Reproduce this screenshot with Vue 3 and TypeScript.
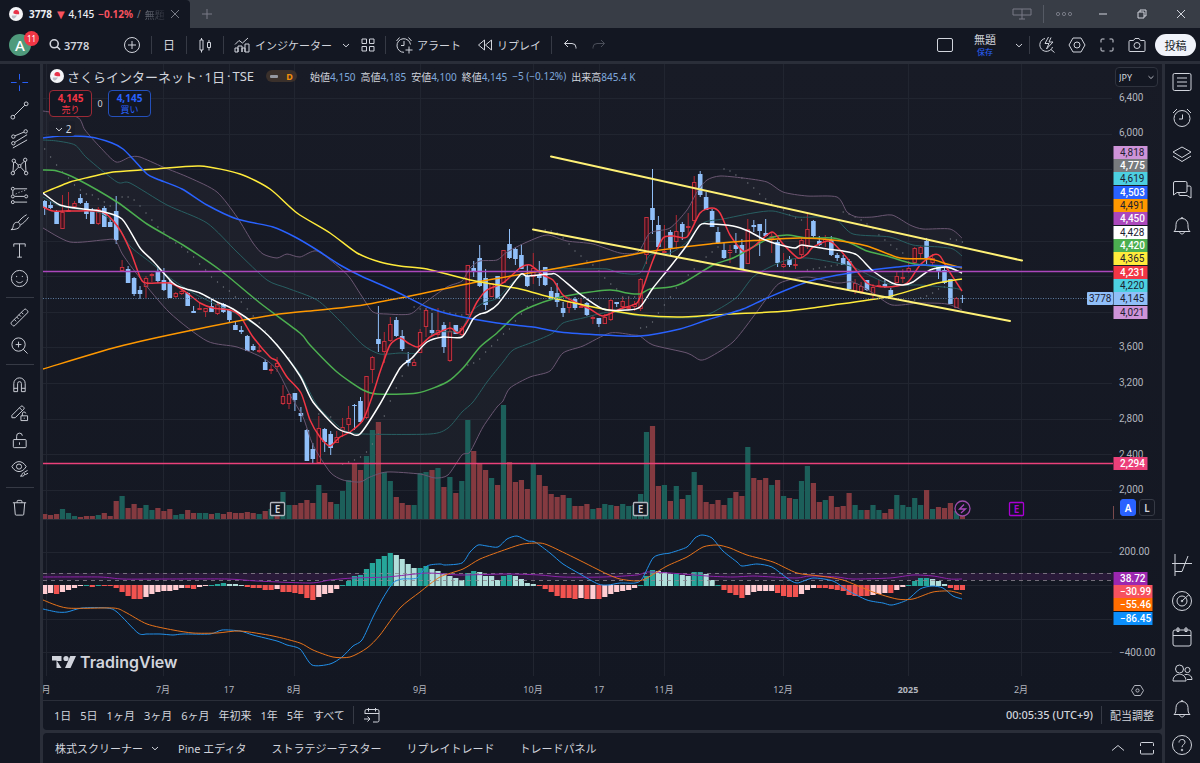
<script setup lang="ts">
import { ref } from 'vue'

type Point = [number, number]

const circle = (x: number, y: number, r: number): string =>
  `M${x - r} ${y}a${r} ${r} 0 1 0 ${r * 2} 0a${r} ${r} 0 1 0 ${-r * 2} 0z`

/* Stroke icons on a 20 x 20 grid */
const icons: Record<string, string> = {
  cross: 'M10 1v6M10 13v6M1 10h6M13 10h6',
  line: circle(3, 17, 2) + circle(17, 3, 2) + 'M4.500 15.500L15.500 4.500',
  pitch: circle(3.5, 8, 1.8) + circle(3.5, 15, 1.8) + circle(16.5, 2.5, 1.8) + 'M5.200 7.200L14.800 3.200M5 14L18 6M3 20L18 11.500',
  pattern: circle(4, 4, 1.8) + circle(16, 3, 1.8) + circle(3, 17, 1.8) + circle(17, 17, 1.8) + circle(10, 9.5, 1.6) +
    'M3.800 6L3.200 15M16.200 5L16.800 15M5.300 5.300L8.800 8.500M14.900 4.500L11.200 8.400M4.300 15.600L8.900 10.700M15.700 15.600L11.200 10.700',
  forecast: circle(3, 4, 1.6) + circle(3, 12, 1.6) + circle(17, 12, 1.6) + circle(3, 18, 1.6) +
    'M5 4h13M5 12h10M5 18h13M3 6v4M6 9.500l1-.5M9 8l1-.4M12 7l1-.4M15 6l1-.4',
  brush: 'M1 17.500c3-.5 1.500-4 3.500-6.500c1.800-2 5.500-1.500 6 1c.6 3.500-3 5.500-9.500 5.500zM8.500 9.800c2.500-3.300 5.500-6 9-8M11 12.500c3-1.500 5.500-4 8.500-8',
  text: 'M4 6V3h12v3M10 3v14M7.500 17h5',
  smile: circle(10, 10, 8.5) + 'M6.500 12.500c1.500 2.600 5.500 2.600 7 0M7 7.300v1.200M13 7.300v1.200',
  ruler: 'M1.500 15L15 1.500a1.500 1.500 0 0 1 2 0l1.500 1.500a1.500 1.500 0 0 1 0 2L5 18.500a1.500 1.500 0 0 1-2 0L1.500 17a1.500 1.500 0 0 1 0-2zM4.500 12l2 2M7 9.500l2 2M9.500 7l2 2M12 4.500l2 2',
  zoom: circle(9, 9, 7) + 'M14 14l4.500 4.500M9 6v6M6 9h6',
  magnet: 'M4 17.500V9a6 6 0 0 1 12 0v8.500h-4V9a2 2 0 0 0-4 0v8.500zM4 14h4M12 14h4',
  pencilLock: 'M2 13L11.500 3.500a1.500 1.500 0 0 1 2 0l1 1a1.500 1.500 0 0 1 0 2L5.500 15.500H2zM10 5l3 3M11.500 13.500h7v5h-7zM13 13.500v-2a1.800 1.800 0 0 1 3.600-.5M15 15.500v1',
  lock: 'M4 9h12a1 1 0 0 1 1 1v6.500a1 1 0 0 1-1 1H4.500a1 1 0 0 1-1-1V10a1 1 0 0 1 1-1M7 9V5.500a3 3 0 0 1 6-.5M10 12v2.500',
  eye: circle(9.5, 8, 2.7) + 'M2 8c4-7 11-7 15 0c-4 7-11 7-15 0zM11 18c2 0 1-3 3-3.500c2 0 2 3-.5 3.500zM15 14l3.500-2M16 16.500l3-1.500',
  trash: 'M3 5h14M7.500 5V3.500a1 1 0 0 1 1-1h3a1 1 0 0 1 1 1V5M4.500 5l1 12a1 1 0 0 0 1 1h7a1 1 0 0 0 1-1l1-12',
  list: 'M2.500 1.500h15a1.500 1.500 0 0 1 1.500 1.500v14a1.500 1.500 0 0 1-1.500 1.500h-15A1.500 1.500 0 0 1 1 17V3a1.500 1.500 0 0 1 1.500-1.500zM5 6h10M5 10h10M5 14h10',
  alarm: circle(10, 10.500, 8) + 'M10.500 6.500v4.500H7M1 5l4-4M19 5l-4-4',
  layers: 'M10 3l9 5l-9 5.500L1 8zM1 12l9 5.500l9-5.500',
  chat: 'M3 1.500h10.500a1.500 1.500 0 0 1 1.500 1.500v8a1.500 1.500 0 0 1-1.500 1.500H5L1.500 15V3A1.500 1.500 0 0 1 3 1.500zM15 6h2.500A1.500 1.500 0 0 1 19 7.500V18l-4-2.500H8a1 1 0 0 1-1-1v-2',
  bell: 'M2 15.500c1.800-1.500 2-3 2-7a6 6 0 0 1 12 0c0 4 .2 5.500 2 7zM7.500 15.500c.5 3.300 4.500 3.300 5 0M9 2.500a1 1 0 0 1 2 0',
  pine: 'M3-1v22M0 8.500h20M3 16.500h7L16 1',
  target: circle(10, 10, 9.500) + circle(10, 10, 5) + circle(10, 10, 0.8) + 'M10 10l7-6.500',
  calendar: 'M3 3h14a2 2 0 0 1 2 2v12a2 2 0 0 1-2 2H3a2 2 0 0 1-2-2V5a2 2 0 0 1 2-2zM1 8.500h18M5 1h2v3.500H5zM13 1h2v3.500h-2z',
  people: circle(7.5, 6, 4) + circle(15.5, 7, 2.600) + 'M1 18c0-9 13-9 13 0zM12.500 11.800c4-1.300 7.500 1 7.500 4.700h-5',
  help: circle(10, 10, 9.5) + circle(10, 15, 0.8) + 'M7 7.500c0-4 6-4 6-.3c0 2.500-3 2.300-3 5',
  plusCircle: circle(10, 10, 7.500) + 'M10 6v8M6 10h8',
  candles: 'M5 5h3v10H5zM6.500 3v2M6.500 15v2.500M12.500 7.500h3v5h-3zM14 5v2.500M14 12.500v3',
  indicator: 'M3 17v-4h3v4zM6 17v-6h4v6M10 17v-4h3v4M13 17V9h4v8zM3 9.500l4-4l3.500 2.500L16 3',
  grid: 'M4 4h4.500v4.500H4zM11.500 4H16v4.500h-4.500zM4 11.500h4.500V16H4zM11.500 11.500H16V16h-4.500z',
  alertAdd: 'M16.500 9.500a6.800 6.800 0 1 0-6.500 7.800M10 6v4.500H7M2.500 6l3-3.500M17.500 6l-3-3.500M15 11.500v7M11.500 15h7',
  replay: 'M9.500 5v10L3.500 10zM16.500 5v10l-6-5z',
  undo: 'M8 5L4.500 8.500L8 12M4.500 8.500H12a4 4 0 0 1 4 4v1',
  redo: 'M12 5l3.500 3.500L12 12M15.500 8.500H8a4 4 0 0 0-4 4v1',
  square: 'M4 3.500h12a1.500 1.500 0 0 1 1.500 1.500v10a1.500 1.500 0 0 1-1.500 1.500H4A1.500 1.500 0 0 1 2.500 15V5A1.500 1.500 0 0 1 4 3.500z',
  bolt: 'M8 3.500a6.500 6.500 0 1 0 7.500 8.500M14 14.500l3.500 3M11.500 2L8 8.500h4L9.500 14L16 7h-4l2-4.500',
  gear: 'M6 3h8l4 7l-4 7H6l-4-7z' + circle(10, 10, 3),
  full: 'M4 7.500V5a1 1 0 0 1 1-1h2.500M12.500 4H15a1 1 0 0 1 1 1v2.500M16 12.500V15a1 1 0 0 1-1 1h-2.500M7.500 16H5a1 1 0 0 1-1-1v-2.500',
  camera: 'M3 5.500h3.500L8 3.500h4l1.500 2H17a1 1 0 0 1 1 1V15.500a1 1 0 0 1-1 1H3a1 1 0 0 1-1-1V6.500a1 1 0 0 1 1-1z' + circle(10, 10.500, 3),
  search: circle(8.500, 9, 5) + 'M12.200 12.700L16 16.500',
  down: 'M7 9l3 2.800L13 9',
  up: 'M4 12.500L10 7.500l6 5',
  close: 'M6 6l8 8M14 6l-8 8',
  add: 'M10 5v10M5 10h10',
  sync: 'M1 5h18v6H1zM10 5v10M7 15h6',
  dots: circle(4, 10, 1.600) + circle(10, 10, 1.600) + circle(16, 10, 1.600),
  min: 'M6 10h8',
  restore: 'M6 8h6v6H6zM8 8V6h6v6h-2',
  goto: 'M3 9V6a1.500 1.500 0 0 1 1.500-1.500h11A1.500 1.500 0 0 1 17 6v9.500a1.500 1.500 0 0 1-1.500 1.500H11M3 8.500h14M6.500 3v3.500M13.500 3v3.500M2 14h6M5.500 11.500L8 14l-2.500 2.500',
  panel: 'M3.500 8V5.500a1 1 0 0 1 1-1h11a1 1 0 0 1 1 1V8M16.500 12v3a1 1 0 0 1-1 1h-11a1 1 0 0 1-1-1v-3',
}

const leftTools: { name: string; icon: string }[][] = [
  [
    { name: '十字', icon: 'cross' },
    { name: 'トレンドライン', icon: 'line' },
    { name: 'フィボナッチ', icon: 'pitch' },
    { name: 'パターン', icon: 'pattern' },
    { name: '予測', icon: 'forecast' },
    { name: 'ブラシ', icon: 'brush' },
    { name: 'テキスト', icon: 'text' },
    { name: 'アイコン', icon: 'smile' },
  ],
  [
    { name: '計測', icon: 'ruler' },
    { name: 'ズーム', icon: 'zoom' },
  ],
  [
    { name: 'マグネット', icon: 'magnet' },
    { name: '描画モード', icon: 'pencilLock' },
    { name: 'ロック', icon: 'lock' },
    { name: '非表示', icon: 'eye' },
  ],
  [{ name: '削除', icon: 'trash' }],
]

const rightTop = [
  { name: 'ウォッチリスト', icon: 'list' },
  { name: 'アラート一覧', icon: 'alarm' },
  { name: 'レイヤー', icon: 'layers' },
  { name: 'チャット', icon: 'chat' },
  { name: '通知', icon: 'bell' },
]
const rightBottom = [
  { name: 'Pine', icon: 'pine' },
  { name: 'スクリーナー', icon: 'target' },
  { name: 'カレンダー', icon: 'calendar' },
  { name: 'コミュニティ', icon: 'people' },
  { name: 'お知らせ', icon: 'bell' },
  { name: 'ヘルプ', icon: 'help' },
]

const ranges = ['1日', '5日', '1ヶ月', '3ヶ月', '6ヶ月', '年初来', '1年', '5年', 'すべて']
const panels = ['Pine エディタ', 'ストラテジーテスター', 'リプレイトレード', 'トレードパネル']
const quotes = [
  ['始値', '4,150'],
  ['高値', '4,185'],
  ['安値', '4,100'],
  ['終値', '4,145'],
  ['', '−5 (−0.12%)'],
  ['出来高', '845.4 K'],
]
const currency = ref('JPY')

/* Bar geometry */
const barX = (i: number): number => Math.round((44.67 + i * 5.959) * 10) / 10

/* high, body top, body bottom, low; a leading "d" marks a falling bar */
const candleData =
  'd200 201 208 215,d201 205 208 209,d210 212 224 224,u195 212 229 229,u192 210 211 212,u201 203 207 209,d194 198 203 204,d201 203 214 219,d208 210 224 224,u207 209 224 225,' +
  'd206 208 227 227,d219 222 227 227,d196 211 240 244,u260 267 271 271,d266 269 283 283,d277 278 294 296,d286 290 294 299,u276 278 287 298,u273 274 276 282,d266 271 281 283,' +
  'd268 280 290 291,d280 282 298 298,u292 293 297 298,u289 291 294 295,d292 293 306 306,d306 311 313 313,u303 308 310 310,u308 308 312 317,d298 306 312 312,u303 304 314 315,' +
  'd303 304 312 313,d309 310 320 322,d321 325 330 330,d326 330 332 334,d335 336 351 351,d344 346 350 351,u346 350 351 353,d359 362 370 370,u365 369 370 374,u357 363 367 372,' +
  'u385 396 404 405,u393 394 404 409,d393 393 400 411,d407 413 416 422,d429 430 461 461,d443 449 459 463,u416 428 463 463,d428 429 442 452,d431 434 448 455,u431 437 443 443,' +
  'u418 427 431 437,u406 418 425 433,d404 405 406 430,d397 401 422 422,u376 376 418 419,u356 357 370 383,d306 339 344 352,u332 341 352 363,u317 324 341 342,d317 320 336 337,' +
  'd330 336 349 351,d352 360 363 366,u359 362 366 366,u329 332 353 353,u308 310 327 337,d313 330 333 336,u308 330 335 338,d322 325 347 353,u322 331 361 362,d325 325 334 334,' +
  'u326 328 335 336,u265 265 315 315,d261 268 272 277,d245 258 286 287,d269 278 305 310,u283 283 297 297,d276 276 299 299,u250 250 283 283,d229 244 258 259,d248 249 259 265,' +
  'd244 255 269 269,d265 276 286 287,u253 268 277 284,d261 275 278 286,d267 267 285 286,d287 291 299 299,d283 293 302 307,d302 308 313 317,u297 302 308 313,d297 299 308 310,' +
  'u298 306 307 308,d302 303 315 316,u315 317 319 324,d318 318 324 327,u314 317 324 324,u299 300 320 321,d302 302 304 307,u297 301 307 309,u297 307 308 310,u301 304 307 311,' +
  'u278 279 309 311,u217 217 255 264,d169 208 220 234,d216 225 247 247,u225 251 253 254,d230 232 248 256,u215 231 242 249,d222 224 232 240,u213 226 227 236,u176 182 221 223,' +
  'd171 174 195 197,d192 197 210 210,d209 211 227 227,d227 232 243 244,d243 250 258 259,u245 250 253 263,d233 245 249 253,d239 245 269 269,u219 229 264 264,d220 225 227 232,' +
  'd224 224 231 256,d219 233 236 237,u233 236 239 253,d240 242 263 267,u253 264 267 268,d256 259 265 267,u259 264 265 269,u237 240 255 257,u212 229 247 249,d220 221 236 238,' +
  'd236 241 245 246,u235 239 242 247,d236 240 255 256,d253 255 258 261,d255 258 265 265,d259 261 289 289,u279 283 291 294,u282 286 292 294,d280 280 290 291,u284 287 295 299,' +
  'u280 285 286 287,d280 284 287 288,d288 290 297 297,u272 276 283 283,u269 277 279 283,u261 268 272 273,u247 248 263 265,u246 247 254 258,d238 241 258 264,u254 258 263 265,' +
  'd266 267 272 279,d266 270 283 284,d279 279 304 304,u297 298 308 308,d295 298 299 303'

const candles = candleData.split(',').map((s, i) => {
  const [high, top, bottom, low] = s.slice(1).split(' ').map(Number)
  return { x: barX(i), down: s[0] === 'd', high, top, bottom, low }
})

const volumeData =
  'r5 r4 r5 g10 g6 g3 r2 r3 r3 g4 r6 r3 r18 g23 r11 r15 r11 g14 g9 r11 r8 r10 g4 g5 r9 r6 g6 g6 r5 g6 r5 r7 r6 r6 r7 r6 g5 r8 g10 r10 g27 g14 r14 r16 r19 r16 g34 r26 r17 g15 ' +
  'g28 g39 r55 r49 g63 g89 r97 g47 g38 r22 r16 r14 g14 g46 g47 r49 g51 r32 g42 r26 g38 g99 r68 r55 r49 g41 r34 g114 r57 r37 r39 r30 g55 r44 r33 r25 r22 r24 g21 r13 r13 r15 g10 r11 g15 g14 r13 g15 g13 g14 ' +
  'g25 g87 r93 r33 g34 r18 g33 r20 g24 g47 r34 r17 r15 r19 r14 g21 r27 r23 g72 r41 r39 r41 g34 r39 g23 r21 g20 g38 g53 r36 r17 g19 r23 r12 r13 r26 g14 g9 r9 g14 g9 r6 r10 g24 g14 g12 g21 g14 r29 g10 r12 r11 r16 g8 r3'
const volumes = volumeData.split(' ').map((s, i) => ({ x: barX(i), up: s[0] === 'g', h: Number(s.slice(1)) }))

/* d/l rising and fading above zero, r/p falling and recovering below */
const histData =
  'p9 p8 r9 p7 p5 p3 p1 d1 r2 d1 r1 r1 r3 r7 r11 r14 r14 p12 p9 p7 p6 p6 p5 p3 r3 r4 p2 p1 d1 d2 d3 l2 l2 l1 r2 r3 r3 r5 r5 p4 r7 r7 r8 r9 r13 r15 p12 p9 p8 p4 ' +
  'd1 d5 d10 d11 d17 d23 d27 d30 d33 l31 l27 l22 l18 d18 d20 l17 l15 l12 l10 l8 l6 d13 d15 l14 l10 l10 l6 d10 d11 l10 l7 l3 l2 r1 r4 r7 r11 r13 r13 r14 p13 r14 p14 r14 p12 p9 p7 p6 p5 p3 ' +
  'd1 d10 d16 l15 l14 l12 d12 l11 l10 d14 d14 l12 l6 d1 r5 r8 r10 r13 p10 p7 p6 p6 p6 r8 r11 r12 r12 p9 p5 p3 r3 r3 r4 r5 r6 r10 r11 r11 r11 p10 p9 p8 r8 p5 p2 d1 d5 d8 d8 l7 l5 l2 r3 r5 r5'
const histogram = histData.split(' ').map((s, i) => {
  const h = Number(s.slice(1))
  const above = s[0] === 'd' || s[0] === 'l'
  return { x: barX(i), y: above ? 586 - h : 585, h, kind: s[0] }
})

const dotSegments: [number, number[]][] = [
  [0, [149, 157, 165, 172, 178, 185, 190, 194, 195, 199, 202, 206]],
  [13, [197, 197, 200, 206, 213, 220, 227, 232, 238, 243, 247, 252, 257, 264, 270, 277, 282, 287, 291, 297, 302, 309, 316, 323, 331, 338, 345, 352, 358]],
  [45, [402, 414, 416, 417]],
  [50, [464, 462, 460, 457, 452, 444, 434, 416, 401, 388, 376, 366]],
  [62, [307, 309, 309, 310, 311, 311, 313, 314, 315]],
  [71, [365, 363, 359, 352, 346, 340, 334, 329, 321, 314, 307, 300]],
  [84, [230, 231, 233, 238, 244, 251, 256, 261, 265, 271, 278, 284, 289]],
  [97, [297, 297, 297]],
  [100, [328, 327, 322, 313, 305, 297, 288, 282, 275, 269, 262, 257, 252, 247]],
  [114, [169, 171, 175, 178, 183, 188, 194, 199, 203, 207, 210, 215, 218, 220]],
  [128, [270, 269, 268, 267, 266, 265]],
  [134, [212, 214, 217, 220, 224, 229, 235, 240, 245, 249, 253]],
  [145, [301, 300, 298, 296, 293, 289, 287]],
  [152, [239, 240, 242]],
]
const dots = dotSegments.flatMap(([start, ys]) => ys.map((y, k) => ({ x: barX(start + k), y })))

const parse = (s: string): Point[] => s.split(' ').map((p) => p.split(',').map(Number) as Point)

/* Catmull-Rom curve through the points */
const curve = (pts: Point[], lead = 'M'): string => {
  let d = `${lead}${pts[0][0]} ${pts[0][1]}`
  for (let i = 0; i < pts.length - 1; i++) {
    const a = pts[Math.max(i - 1, 0)]
    const b = pts[i]
    const c = pts[i + 1]
    const e = pts[Math.min(i + 2, pts.length - 1)]
    d += `C${(b[0] + (c[0] - a[0]) / 8).toFixed(1)} ${(b[1] + (c[1] - a[1]) / 8).toFixed(1)} ${(c[0] - (e[0] - b[0]) / 8).toFixed(1)} ${(c[1] - (e[1] - b[1]) / 8).toFixed(1)} ${c[0]} ${c[1]}`
  }
  return d
}

const upper = parse(
  '43,111 77,117 85,130 100,147 116,162 130,157 140,157 163,167 190,178 217,192 237,217 253,243 263,254 277,258 287,254 300,257 317,251 340,268 350,278 363,298 373,312 387,314 410,314 423,304 447,287 462,281 470,268 480,261 497,260 507,252 527,242 547,235 567,241 593,244 620,253 638,252 650,233 670,228 687,210 697,192 707,180 720,176 743,178 767,182 783,192 807,196 837,197 847,212 857,217 873,217 892,215 910,225 923,229 950,229 962,238',
)
const lower = parse(
  '43,228 70,242 103,240 115,240 123,255 140,278 170,313 207,341 237,347 263,358 277,370 290,395 303,417 313,445 330,472 343,480 360,482 370,477 387,472 420,474 435,478 448,475 462,455 470,452 483,427 497,407 503,401 510,388 530,377 550,371 563,353 583,346 610,333 633,335 640,336 653,345 687,353 700,360 710,357 733,342 753,317 767,298 780,283 807,277 837,283 853,282 873,293 892,305 920,303 947,304 962,310',
)
const bandFill = curve(upper) + curve([...lower].reverse(), 'L') + 'Z'

const lines: { cls: string; d: string }[] = [
  { cls: 'mauve', d: curve(upper) },
  { cls: 'mauve', d: curve(lower) },
  { cls: 'teal', d: curve(parse('43,140 57,141 75,145 87,158 117,182 130,183 167,205 207,223 237,252 267,280 287,288 317,300 340,321 363,345 380,354 400,353 417,353 423,343 437,332 460,331 470,313 483,303 498,298 513,282 527,274 553,269 583,269 607,269 620,273 640,273 650,255 670,253 687,242 703,223 723,219 753,213 773,211 797,217 820,217 837,220 853,234 890,237 913,245 940,247 953,249 962,256')) },
  { cls: 'teal', d: curve(parse('43,197 60,206 83,210 100,213 117,225 130,246 150,262 173,280 193,293 217,305 233,312 260,328 277,345 300,374 317,405 337,425 345,431 363,434 430,434 448,428 462,412 473,402 487,382 503,362 513,350 533,342 553,333 563,323 583,318 610,312 640,316 670,318 700,317 717,310 737,297 753,277 770,267 787,260 807,258 837,263 853,267 873,277 893,285 920,285 953,288 962,290')) },
  { cls: 'green', d: curve(parse('43,170 57,171 77,179 117,202 147,224 183,245 220,270 260,303 300,333 310,345 337,372 363,390 377,394 417,393 447,382 463,368 480,347 497,333 517,314 533,306 553,299 577,294 610,290 627,293 640,294 650,289 670,287 683,283 713,265 733,258 753,247 770,238 787,235 807,238 833,238 850,243 867,251 887,256 910,263 923,265 950,268 962,273')) },
  { cls: 'red', d: curve(parse('43,207 53,211 73,211 103,212 118,227 130,250 140,277 146,283 170,283 187,293 200,303 213,308 230,310 240,316 253,337 270,357 277,361 287,377 301,393 310,420 320,437 330,446 340,437 350,432 363,420 372,397 380,372 390,345 400,338 408,343 418,347 430,337 450,328 458,333 467,322 477,302 487,290 503,283 520,268 530,265 543,275 553,280 563,295 577,303 590,309 603,316 620,309 637,303 643,288 653,260 663,238 673,236 687,237 700,213 712,208 720,213 730,235 743,251 753,247 772,232 783,244 798,258 807,254 813,247 827,241 833,243 847,258 867,283 887,287 907,283 920,265 933,255 940,256 947,268 962,291')) },
  { cls: 'orange', d: curve(parse('43,369 117,347 193,330 273,315 320,310 363,305 420,294 477,282 553,269 620,257 653,251 710,244 763,240 800,238 833,240 867,246 900,258 930,259 947,264 962,268')) },
  { cls: 'yellow', d: curve(parse('43,193 70,182 90,177 113,172 140,170 157,169 200,166 240,174 270,189 297,213 330,233 357,253 380,262 400,266 427,269 470,280 520,289 553,298 603,309 640,315 680,317 730,314 787,311 833,305 887,297 933,284 962,279')) },
  { cls: 'blue', d: curve(parse('43,138 60,136 90,137 112,143 123,149 133,159 147,174 157,179 182,189 207,205 237,219 273,227 295,237 317,250 340,265 363,277 393,290 427,307 453,315 497,323 533,327 560,332 603,335 640,336 680,329 707,320 743,309 767,298 810,281 850,273 897,267 923,265 962,267')) },
  { cls: 'white', d: curve(parse('43,193 60,205 83,209 100,211 122,219 140,248 153,261 173,283 183,288 200,293 217,302 233,309 260,328 277,345 300,376 313,402 337,428 350,433 360,434 380,404 400,368 412,358 427,342 443,337 462,337 473,319 480,314 487,312 498,304 520,275 527,276 550,274 557,275 580,294 603,309 627,310 640,307 653,288 670,267 687,245 700,225 710,224 733,226 748,231 763,239 777,244 795,248 802,245 827,249 843,251 857,255 873,271 892,283 903,285 913,282 930,270 947,267 962,273')) },
]

const oscLines: { cls: string; d: string }[] = [
  { cls: 'rsi', d: curve(parse('43,577 100,577 123,579 167,579 227,579 257,581 310,583 330,580 353,578 387,577 427,573 460,575 507,574 540,575 563,577 603,577 637,575 647,572 670,573 707,576 733,577 753,576 773,577 797,578 810,576 837,577 853,579 890,578 913,575 933,576 950,579 962,579')) },
  { cls: 'macd', d: curve(parse('43,609 57,612 67,612 82,608 107,608 117,612 138,633 147,634 160,634 173,635 183,634 210,634 222,630 240,631 253,635 277,641 287,645 300,649 312,665 330,664 342,657 353,646 362,640 373,617 383,598 393,583 402,579 417,578 427,566 440,564 445,565 462,563 470,552 478,545 487,546 498,547 507,539 517,536 528,541 535,542 550,553 563,564 580,574 598,584 608,585 620,583 635,583 642,579 653,558 663,554 670,553 687,547 695,538 702,535 712,538 723,551 737,562 742,566 757,564 772,567 787,578 797,583 813,578 833,581 847,590 867,600 883,603 892,605 907,600 920,589 932,586 943,588 953,596 962,599')) },
  { cls: 'signal', d: curve(parse('43,600 67,608 113,608 125,612 147,624 173,630 193,633 217,633 240,631 273,636 300,643 313,650 333,657 350,657 367,648 380,635 400,608 420,592 440,577 463,569 480,559 507,549 523,544 540,543 550,546 577,559 607,574 620,579 637,581 647,578 667,566 687,557 703,547 717,545 730,548 747,555 773,562 797,573 820,576 843,580 873,592 897,599 913,599 933,592 950,591 962,594')) },
]

const gridY = [98, 134, 169, 205, 241, 276, 312, 347, 383, 419, 454, 490, 552, 585, 619, 652]
const months = [
  { x: 46, label: '月' },
  { x: 163, label: '7月' },
  { x: 229, label: '17' },
  { x: 294, label: '8月' },
  { x: 420, label: '9月' },
  { x: 533, label: '10月' },
  { x: 599, label: '17' },
  { x: 664, label: '11月' },
  { x: 783, label: '12月' },
  { x: 908, label: '2025' },
  { x: 1021, label: '2月' },
]
const prices = [
  { y: 97, label: '6,400' },
  { y: 132, label: '6,000' },
  { y: 346, label: '3,600' },
  { y: 382, label: '3,200' },
  { y: 418, label: '2,800' },
  { y: 454, label: '2,400' },
  { y: 489, label: '2,000' },
  { y: 551, label: '200.00' },
  { y: 652, label: '−400.00' },
]
const tags = [
  { y: 146, w: 34, label: '4,818', bg: '#ce93d8', fg: '#1c2030' },
  { y: 159, w: 34, label: '4,775', bg: '#787b7e', fg: '#ffffff' },
  { y: 172, w: 34, label: '4,619', bg: '#4dd0e1', fg: '#1c2030' },
  { y: 186, w: 34, label: '4,503', bg: '#2962ff', fg: '#ffffff' },
  { y: 199, w: 34, label: '4,491', bg: '#ff9800', fg: '#1c2030' },
  { y: 212, w: 34, label: '4,450', bg: '#ab47bc', fg: '#ffffff' },
  { y: 226, w: 34, label: '4,428', bg: '#ffffff', fg: '#1c2030' },
  { y: 239, w: 34, label: '4,420', bg: '#4caf50', fg: '#ffffff' },
  { y: 252, w: 34, label: '4,365', bg: '#ffeb3b', fg: '#1c2030' },
  { y: 266, w: 34, label: '4,231', bg: '#f23645', fg: '#ffffff' },
  { y: 279, w: 34, label: '4,220', bg: '#4dd0e1', fg: '#1c2030' },
  { y: 292, w: 34, label: '4,145', bg: '#90bff9', fg: '#1c2030' },
  { y: 306, w: 34, label: '4,021', bg: '#ce93d8', fg: '#1c2030' },
  { y: 457, w: 34, label: '2,294', bg: '#ec407a', fg: '#ffffff' },
  { y: 572, w: 34, label: '38.72', bg: '#9c27b0', fg: '#ffffff' },
  { y: 585, w: 39, label: '−30.99', bg: '#f7525f', fg: '#ffffff' },
  { y: 598, w: 39, label: '−55.46', bg: '#ff6d00', fg: '#ffffff' },
  { y: 612, w: 39, label: '−86.45', bg: '#0c8ffb', fg: '#ffffff' },
]
</script>

<template>
  <div class="app">
    <header class="titlebar">
      <div class="tab">
        <svg class="logo" viewBox="0 0 14 14" aria-hidden="true">
          <circle cx="7" cy="7" r="7" fill="#f4f5f8" />
          <path d="M4.500 6.500a2.800 2.800 0 0 1 5.600-1.200v2H7z" fill="#e8334a" />
          <path d="M3 8.500h5l-2 2.500a2 2 0 0 1-3-2.500z" fill="#b9bcc6" />
        </svg>
        <b class="tab-code">3778</b>
        <span class="tri">▼</span>
        <span class="tab-price">4,145</span>
        <b class="tab-change">−0.12%</b>
        <span class="tab-slash">/</span>
        <span class="tab-name">無題</span>
        <button class="tab-close" aria-label="タブを閉じる"><svg class="ic" viewBox="0 0 20 20"><path :d="icons.close" /></svg></button>
      </div>
      <button class="tab-add" aria-label="新しいタブ"><svg class="ic" viewBox="0 0 20 20"><path :d="icons.add" /></svg></button>
      <div class="window">
        <button class="w-sync dim" aria-label="同期"><svg class="ic" viewBox="0 0 20 20"><path :d="icons.sync" /></svg></button>
        <i class="sep"></i>
        <button class="w-btn dim" aria-label="メニュー"><svg class="ic" viewBox="0 0 20 20"><path :d="icons.dots" /></svg></button>
        <button class="w-btn" aria-label="最小化"><svg class="ic" viewBox="0 0 20 20"><path :d="icons.min" /></svg></button>
        <button class="w-btn" aria-label="元に戻す"><svg class="ic" viewBox="0 0 20 20"><path :d="icons.restore" /></svg></button>
        <button class="w-btn" aria-label="閉じる"><svg class="ic" viewBox="0 0 20 20"><path :d="icons.close" /></svg></button>
      </div>
    </header>

    <nav class="toolbar">
      <button class="account" aria-label="アカウント"><span class="avatar">A</span><span class="badge">11</span></button>
      <button class="symbol"><svg class="ic search" viewBox="2 3 15 15"><path :d="icons.search" /></svg>3778</button>
      <button class="t32" aria-label="比較"><svg class="ic" viewBox="0 0 20 20"><path :d="icons.plusCircle" /></svg></button>
      <i class="sep"></i>
      <button class="t28 day">日</button>
      <i class="sep"></i>
      <button class="t30" aria-label="ローソク足"><svg class="ic" viewBox="0 0 20 20"><path :d="icons.candles" /></svg></button>
      <i class="sep"></i>
      <button class="t-ind"><svg class="ic" viewBox="0 0 20 20"><path :d="icons.indicator" /></svg>インジケーター</button>
      <button class="t16" aria-label="お気に入り"><svg class="ic" viewBox="0 0 20 20"><path :d="icons.down" /></svg></button>
      <button class="t28" aria-label="テンプレート"><svg class="ic" viewBox="0 0 20 20"><path :d="icons.grid" /></svg></button>
      <i class="sep"></i>
      <button class="t-alert"><svg class="ic" viewBox="0 0 20 20"><path :d="icons.alertAdd" /></svg>アラート</button>
      <button class="t-replay"><svg class="ic" viewBox="0 0 20 20"><path :d="icons.replay" /></svg>リプレイ</button>
      <i class="sep"></i>
      <button class="t30" aria-label="元に戻す操作"><svg class="ic" viewBox="0 0 20 20"><path :d="icons.undo" /></svg></button>
      <button class="t28 off" aria-label="やり直し"><svg class="ic" viewBox="0 0 20 20"><path :d="icons.redo" /></svg></button>
      <div class="toolbar-right">
        <button class="t28" aria-label="レイアウト"><svg class="ic" viewBox="0 0 20 20"><path :d="icons.square" /></svg></button>
        <button class="layout-name"><span>無題</span><small>保存</small></button>
        <button class="t16" aria-label="レイアウト管理"><svg class="ic" viewBox="0 0 20 20"><path :d="icons.down" /></svg></button>
        <i class="sep"></i>
        <button class="t30" aria-label="クイック検索"><svg class="ic" viewBox="0 0 20 20"><path :d="icons.bolt" /></svg></button>
        <button class="t30" aria-label="設定"><svg class="ic" viewBox="0 0 20 20"><path :d="icons.gear" /></svg></button>
        <button class="t30" aria-label="全画面"><svg class="ic" viewBox="0 0 20 20"><path :d="icons.full" /></svg></button>
        <button class="t30" aria-label="スナップショット"><svg class="ic" viewBox="0 0 20 20"><path :d="icons.camera" /></svg></button>
        <button class="publish">投稿</button>
      </div>
    </nav>

    <div class="workspace">
      <aside class="left">
        <div v-for="(group, g) in leftTools" :key="g" class="group">
          <button v-for="t in group" :key="t.icon" :class="{ active: t.icon === 'cross' }" :aria-label="t.name">
            <svg class="ic" viewBox="0 0 20 20"><path :d="icons[t.icon]" /></svg>
          </button>
        </div>
      </aside>

      <main class="center">
        <section class="chart">
          <svg class="plot" viewBox="43 64 1119 636" role="img" aria-label="チャート">
            <g class="grid">
              <path v-for="y in gridY" :key="y" :d="`M43 ${y + 0.5}H1112`" />
              <path v-for="m in months" :key="m.x" :d="`M${m.x + 0.5} 64V676`" />
            </g>
            <path class="band" :d="bandFill" />
            <g>
              <rect v-for="(v, i) in volumes" :key="i" :class="v.up ? 'vol-up' : 'vol-down'" :x="v.x - 2.6" :y="519 - v.h" width="5.200" :height="v.h" />
            </g>
            <g v-for="(c, i) in candles" :key="i" :class="c.down ? 'down' : 'up'">
              <path :d="`M${c.x} ${c.high}V${c.top}M${c.x} ${c.bottom}V${c.low}`" />
              <rect v-if="c.down" :x="c.x - 2.300" :y="c.top" width="4.600" :height="Math.max(c.bottom - c.top, 1)" />
              <rect v-else :x="c.x - 1.700" :y="c.top + 0.500" width="3.400" :height="Math.max(c.bottom - c.top - 1, 1)" />
            </g>
            <circle v-for="(p, i) in dots" :key="i" class="dot" :cx="p.x" :cy="p.y" r="0.700" />
            <path v-for="(l, i) in lines" :key="i" class="ma" :class="l.cls" :d="l.d" />
            <path class="level-purple" d="M43 271.500H1113" />
            <path class="level-pink" d="M43 463.500H1113" />
            <path class="last" d="M43 298.500H1087" />
            <path class="trend" d="M551 156.500L1022 260.500M533 229.500L1010 321" />
            <g v-for="x in [277, 640]" :key="x" class="mark">
              <rect :x="x - 6.500" y="502.500" width="14" height="13" rx="1" />
              <text :x="x + 0.500" y="513">E</text>
            </g>
            <g class="mark future">
              <rect x="1009.500" y="502.500" width="14" height="13" rx="1" />
              <text x="1016.500" y="513">E</text>
            </g>
            <g class="flash">
              <circle cx="962.500" cy="508.500" r="7.500" />
              <path d="M964 504.500L959.500 509H965.500L961 513" />
            </g>
            <path class="split" d="M43 519.500H1162" />
            <path class="tick" d="M1113.500 506V519" />

            <rect class="rsi-band" x="43" y="573" width="1070" height="7" />
            <g>
              <rect v-for="(h, i) in histogram" :key="i" :class="`h-${h.kind}`" :x="h.x - 2.6" :y="h.y" width="5.200" :height="h.h" />
            </g>
            <path class="dash" d="M43 573.500H1113M43 580.500H1113" />
            <path v-for="l in oscLines" :key="l.cls" class="osc" :class="l.cls" :d="l.d" />

            <text v-for="p in prices" :key="p.label" class="axis" x="1119" :y="p.y + 4">{{ p.label }}</text>
            <g v-for="t in tags" :key="t.label">
              <rect x="1113.500" :y="t.y" :width="t.w" height="13" :fill="t.bg" />
              <text class="axis tag" :class="{ strong: t.fg === '#ffffff' }" x="1120" :y="t.y + 10">{{ t.label }}</text>
            </g>
            <rect x="1087" y="292" width="26" height="13" rx="1" fill="#90bff9" />
            <text class="axis tag" x="1089" y="302">3778</text>
            <text v-for="m in months" :key="m.x" class="month" :class="{ year: m.label === '2025' }" :x="m.x" y="693">{{ m.label }}</text>
            <path class="cog" :d="'M1134.500 685.500h6l3 5l-3 5h-6l-3-5z' + circle(1137.5, 690.5, 1.600)" />
            <g class="brand">
              <path d="M61.500 668V661H57M52 656h9.500v12h-5v-7.500H52zM70.500 668h-5.500l5.300-12h5.700z" />
              <circle cx="66" cy="658.500" r="2.600" />
              <text x="80" y="668">TradingView</text>
            </g>
          </svg>

          <div class="legend">
            <div class="title">
              <svg class="logo" viewBox="0 0 14 14" aria-hidden="true">
                <circle cx="7" cy="7" r="7" fill="#f4f5f8" />
                <path d="M4.500 6.500a2.800 2.800 0 0 1 5.600-1.200v2H7z" fill="#e8334a" />
                <path d="M3 8.500h5l-2 2.500a2 2 0 0 1-3-2.500z" fill="#b9bcc6" />
              </svg>
              <h1><span>さくらインターネット</span><span>·</span><span>1日</span><span>·</span><span>TSE</span></h1>
              <span class="pill"><i></i><b>D</b></span>
              <span v-for="q in quotes" :key="q[1]" class="quote">{{ q[0] }}<em>{{ q[1] }}</em></span>
            </div>
            <div class="trade">
              <button class="sell"><b>4,145</b><span>売り</span></button>
              <span class="spread">0</span>
              <button class="buy"><b>4,145</b><span>買い</span></button>
            </div>
            <button class="count"><svg class="ic" viewBox="4 4 12 12"><path :d="icons.down" /></svg>2</button>
          </div>

          <div class="currency">
            <select v-model="currency" aria-label="通貨"><option>JPY</option></select>
            <svg class="ic" viewBox="4 4 12 12" aria-hidden="true"><path :d="icons.down" /></svg>
          </div>
          <div class="scale">
            <button class="on">A</button>
            <button>L</button>
          </div>
        </section>

        <div class="ranges">
          <button v-for="r in ranges" :key="r">{{ r }}</button>
          <i class="sep"></i>
          <button aria-label="日付へ移動"><svg class="ic" viewBox="0 0 20 20"><path :d="icons.goto" /></svg></button>
          <div class="ranges-right">
            <button class="clock">00:05:35 (UTC+9)</button>
            <i class="sep"></i>
            <button>配当調整</button>
          </div>
        </div>
      </main>

      <footer class="bottom">
        <button class="screener">株式スクリーナー<svg class="ic" viewBox="0 0 20 20"><path :d="icons.down" /></svg></button>
        <button v-for="p in panels" :key="p">{{ p }}</button>
        <div class="bottom-right">
          <button aria-label="開く"><svg class="ic" viewBox="0 0 20 20"><path :d="icons.up" /></svg></button>
          <button aria-label="最大化"><svg class="ic" viewBox="0 0 20 20"><path :d="icons.panel" /></svg></button>
        </div>
      </footer>

      <aside class="right">
        <button v-for="t in rightTop" :key="t.name" :aria-label="t.name"><svg class="ic" viewBox="0 0 20 20"><path :d="icons[t.icon]" /></svg></button>
        <span class="fill"></span>
        <button v-for="t in rightBottom" :key="t.name" :aria-label="t.name"><svg class="ic" viewBox="0 0 20 20"><path :d="icons[t.icon]" /></svg></button>
      </aside>
    </div>
  </div>
</template>

<style>
body {
  margin: 0;
  background: #131722;
}
</style>

<style scoped>
.app {
  min-height: 100vh;
  display: flex;
  flex-direction: column;
  background: #131722;
  color: #d1d4dc;
  font-family: "Noto Sans", "Noto Sans CJK JP", sans-serif;
  font-size: 11px;
}
button {
  display: flex;
  align-items: center;
  justify-content: center;
  margin: 0;
  padding: 0;
  border: 0;
  background: none;
  color: inherit;
  font: inherit;
  white-space: nowrap;
}
.ic {
  flex: none;
  width: 20px;
  height: 20px;
  fill: none;
  stroke: currentColor;
  stroke-width: 1;
  overflow: visible;
}
.logo {
  flex: none;
  width: 14px;
  height: 14px;
}
.sep {
  flex: none;
  width: 1px;
  height: 18px;
  margin: 0 3px;
  background: #363a45;
}

.titlebar {
  display: flex;
  height: 28px;
  background: #383d46;
  font-size: 10px;
}
.tab {
  display: flex;
  align-items: center;
  box-sizing: border-box;
  width: 190px;
  padding-left: 9px;
  background: #131722;
  border-radius: 0 4px 0 0;
}
.tab-code {
  margin-left: 6px;
  color: #eceef3;
}
.tri {
  margin: 0 4px 0 5px;
  color: #f7525f;
  font-family: "DejaVu Sans", sans-serif;
  font-size: 10px;
}
.tab-price {
  color: #eceef3;
  font-weight: 500;
}
.tab-change {
  margin-left: 4px;
  color: #f7525f;
}
.tab-slash {
  margin: 0 4px;
  color: #787b86;
}
.tab-name {
  background: linear-gradient(90deg, #6a6e79, #262a35);
  background-clip: text;
  color: transparent;
}
.tab-close {
  margin-left: auto;
  margin-right: 5px;
  color: #787b86;
}
.tab-add {
  width: 34px;
  color: #787b86;
}
.window {
  display: flex;
  align-items: center;
  margin-left: auto;
}
.w-sync {
  width: 38px;
}
.w-btn {
  width: 39px;
  height: 28px;
  color: #d1d4dc;
}
.dim {
  color: #787b86;
}
.titlebar .sep {
  margin: 0 0 0 2px;
  background: #555a64;
}

.toolbar {
  display: flex;
  align-items: center;
  height: 32px;
  margin-top: 1px;
  border-bottom: 3px solid #2a2e39;
}
.toolbar button {
  height: 32px;
}
.account {
  position: relative;
  width: 40px;
}
.avatar {
  width: 22px;
  height: 22px;
  border-radius: 50%;
  background: #4f9a7c;
  color: #ffffff;
  font-size: 15px;
  font-weight: 500;
  line-height: 22px;
}
.badge {
  position: absolute;
  left: 24px;
  top: 2px;
  width: 15px;
  height: 15px;
  border-radius: 50%;
  background: #f23645;
  color: #ffffff;
  font-size: 8px;
  line-height: 15px;
}
.toolbar .symbol {
  justify-content: flex-start;
  gap: 3px;
  width: 76px;
  padding-left: 9px;
  font-weight: 600;
}
.search {
  width: 12px;
  height: 12px;
  stroke-width: 2;
}
.t16 { width: 16px; }
.t28 { width: 28px; }
.t30 { width: 30px; }
.t32 { width: 32px; }
.day {
  font-size: 12px;
}
.off {
  color: #4a4e59;
}
.t-ind,
.t-alert,
.t-replay {
  justify-content: flex-start;
  gap: 3px;
}
.t-ind {
  width: 111px;
  padding-left: 5px;
}
.t-alert {
  width: 81px;
  padding-left: 5px;
}
.t-replay {
  width: 78px;
  padding-left: 5px;
  gap: 2px;
}
.toolbar-right {
  display: flex;
  align-items: center;
  margin-left: auto;
  padding-right: 4px;
}
.toolbar-right .sep {
  margin: 0 2px;
}
.layout-name {
  flex-direction: column;
  width: 52px;
  line-height: 12px;
}
.layout-name small {
  color: #2962ff;
  font-size: 8px;
  line-height: 11px;
}
.toolbar .publish {
  width: 41px;
  height: 22px;
  margin-left: 3px;
  border-radius: 11px;
  background: #f0f3fa;
  color: #131722;
}

.workspace {
  flex: 1;
  display: grid;
  grid-template-columns: 40px minmax(0, 1fr) 35px;
  grid-template-rows: 1fr 30px;
  gap: 3px;
  background: #2a2e39;
}
.left,
.right {
  grid-row: 1 / 3;
  background: #131722;
}
.left {
  padding-top: 4px;
}
.group + .group {
  position: relative;
  padding-top: 11px;
}
.group + .group::before {
  content: "";
  position: absolute;
  top: 5px;
  left: 6px;
  right: 6px;
  height: 1px;
  background: #363a45;
}
.left button {
  width: 39px;
  height: 28px;
}
.left .active {
  color: #2962ff;
}
.left .ic {
  width: 19px;
  height: 19px;
}
.right {
  display: flex;
  flex-direction: column;
  grid-column: 3;
  grid-row: 1 / 3;
}
.right button {
  width: 34px;
  height: 36px;
}
.right .fill {
  flex: 1;
}
.center {
  grid-column: 2;
  background: #131722;
  border-radius: 0 0 4px 4px;
}
.bottom {
  grid-column: 2;
  grid-row: 2;
  display: flex;
  align-items: center;
  gap: 25px;
  padding-left: 12px;
  background: #131722;
  border-radius: 4px 4px 0 0;
}
.screener {
  gap: 2px;
}
.screener + button {
  margin-left: -12px;
}
.bottom-right {
  display: flex;
  gap: 9px;
  margin-left: auto;
  padding-right: 5px;
}

.chart {
  position: relative;
  background: linear-gradient(#181b26, #131722);
  border-bottom: 1px solid #2a2e39;
}
.plot {
  display: block;
  width: 100%;
  height: auto;
}
.grid path {
  stroke: #212530;
}
.band {
  fill: rgba(200, 210, 210, 0.04);
}
.vol-up { fill: #1c5f5a; }
.vol-down { fill: #843a40; }
.down path { stroke: #90bff9; fill: none; }
.down rect { fill: #90bff9; }
.up path { stroke: #b22833; fill: none; }
.up rect { stroke: #c5303d; fill: #3a1320; }
.dot { fill: #70747c; }
.ma { fill: none; stroke-width: 1.500; stroke-linejoin: round; }
.mauve { stroke: #6a5672; stroke-width: 1; }
.teal { stroke: #285f62; stroke-width: 1; }
.green { stroke: #4caf50; }
.red { stroke: #f23645; }
.orange { stroke: #ff9800; }
.yellow { stroke: #ffeb3b; }
.blue { stroke: #2962ff; }
.white { stroke: #ffffff; }
.level-purple { stroke: #ab47bc; stroke-width: 1.500; }
.level-pink { stroke: #ec407a; stroke-width: 1.500; }
.last { stroke: #5c7ba0; stroke-dasharray: 1 1.500; }
.trend { stroke: #fff176; stroke-width: 2; stroke-linecap: round; }
.mark rect { fill: #131722; stroke: #b2b5be; stroke-width: 1.300; }
.mark text { fill: #d1d4dc; font-size: 10px; font-weight: 600; text-anchor: middle; }
.future rect { stroke: #aa00d4; }
.future text { fill: #aa00d4; }
.flash circle { fill: #131722; stroke: #9c4bab; stroke-width: 1.300; }
.flash path { fill: none; stroke: #ab47bc; stroke-width: 1.300; }
.split { stroke: #2a2e39; }
.tick { stroke: #7a4a4c; }
.rsi-band { fill: rgba(156, 39, 176, 0.16); }
.dash { stroke: #8b8590; stroke-dasharray: 4 4; fill: none; opacity: 0.8; }
.h-d { fill: #26a69a; }
.h-l { fill: #b2dfdb; }
.h-r { fill: #f15350; }
.h-p { fill: #ffcdd2; }
.osc { fill: none; stroke-width: 1; }
.rsi { stroke: #8e24aa; }
.macd { stroke: #2190ea; }
.signal { stroke: #e8731a; }
.axis {
  fill: #b2b5be;
  font-family: Roboto, sans-serif;
  font-size: 10px;
}
.tag { fill: #1c2030; }
.strong { fill: #ffffff; font-weight: 500; }
.month {
  fill: #b2b5be;
  font-size: 9px;
  text-anchor: middle;
}
.year {
  font-weight: 700;
}
.cog { fill: none; stroke: #b2b5be; }
.brand { fill: #d1d4dc; }
.brand text {
  font-family: Inter, sans-serif;
  font-size: 16px;
  font-weight: 600;
}

.legend {
  position: absolute;
  left: 6px;
  top: 3px;
}
.title {
  display: flex;
  align-items: center;
  height: 18px;
  padding-left: 1px;
}
.title h1 {
  display: flex;
  gap: 2px;
  margin: 0 12px 0 3px;
  font-size: 13px;
  font-weight: 400;
  white-space: nowrap;
}
.pill {
  display: flex;
  align-items: center;
  justify-content: space-around;
  width: 31px;
  height: 12px;
  margin-right: 13px;
  border-radius: 6px;
  background: #3a302b;
  color: #f08f0a;
  font-size: 9px;
}
.pill i {
  width: 8px;
  height: 3px;
  border-radius: 1px;
  background: #9598a1;
}
.quote {
  margin-right: 5px;
  font-size: 10px;
  white-space: nowrap;
}
.quote em {
  color: #7fa9dd;
  font-style: normal;
}
.trade {
  display: flex;
  align-items: center;
  margin-top: 5px;
}
.trade button {
  flex-direction: column;
  box-sizing: border-box;
  width: 43px;
  height: 27px;
  border: 1px solid;
  border-radius: 4px;
  background: #131722;
  font-size: 10px;
  line-height: 13px;
}
.trade button span {
  font-size: 9px;
  line-height: 10px;
}
.trade .sell {
  border-color: #9c2a36;
  color: #f23645;
}
.trade .buy {
  border-color: #2450bb;
  color: #2962ff;
}
.spread {
  width: 16px;
  font-size: 9px;
  text-align: center;
}
.count {
  gap: 1px;
  width: 26px;
  height: 15px;
  margin-top: 4px;
  background: #1b1e29;
  border-radius: 3px;
  font-size: 10px;
}
.count .ic {
  width: 12px;
  height: 12px;
}
.currency {
  position: absolute;
  top: 3px;
  right: 4px;
  display: flex;
  align-items: center;
}
.currency select {
  appearance: none;
  width: 43px;
  height: 20px;
  padding: 0 3px;
  border: 1px solid #2f333e;
  border-radius: 4px;
  background: #131722;
  color: #d1d4dc;
  font: 9px "Noto Sans", sans-serif;
}
.currency .ic {
  width: 10px;
  height: 10px;
  margin-left: -12px;
  margin-right: 2px;
  pointer-events: none;
}
.scale {
  position: absolute;
  top: 435px;
  right: 7px;
  display: flex;
  gap: 3px;
}
.scale button {
  box-sizing: border-box;
  width: 16px;
  height: 17px;
  border: 1px solid #363a45;
  border-radius: 3px;
  font-size: 10px;
  font-weight: 600;
}
.scale .on {
  border-color: #2962ff;
  background: #2962ff;
  color: #ffffff;
}

.ranges {
  display: flex;
  align-items: center;
  gap: 9px;
  height: 27px;
  padding-left: 11px;
}
.ranges .sep {
  margin: 0 -1px;
}
.ranges-right {
  display: flex;
  align-items: center;
  gap: 9px;
  margin-left: auto;
  padding-right: 8px;
}
.clock {
  font-weight: 500;
}
</style>
